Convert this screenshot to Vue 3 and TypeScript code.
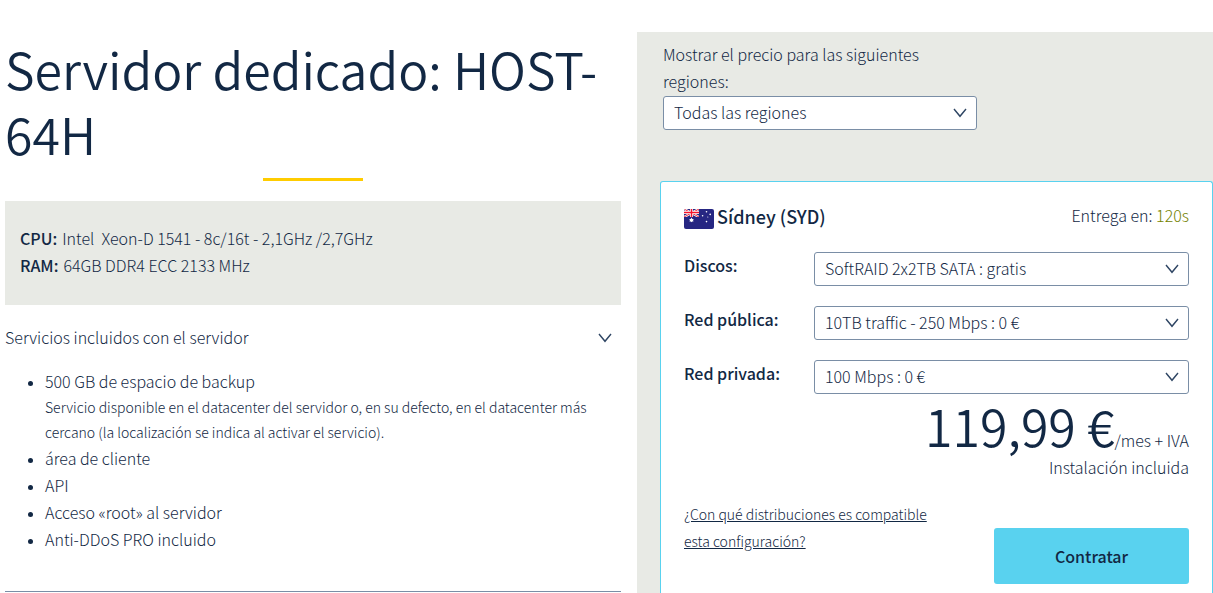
<script setup lang="ts">
import { ref } from 'vue'

interface Option {
  id: string
  label: string
  choices: string[]
}

const regions: string[] = ['Todas las regiones', 'Sídney (SYD)']
const region = ref(regions[0])

const options: Option[] = [
  { id: 'disks', label: 'Discos:', choices: ['SoftRAID 2x2TB SATA : gratis'] },
  { id: 'public', label: 'Red pública:', choices: ['10TB traffic - 250 Mbps : 0 €'] },
  { id: 'private', label: 'Red privada:', choices: ['100 Mbps : 0 €'] },
]

const services: { name: string; note?: string }[] = [
  {
    name: '500 GB de espacio de backup',
    note: 'Servicio disponible en el datacenter del servidor o, en su defecto, en el datacenter más cercano (la localización se indica al activar el servicio).',
  },
  { name: 'área de cliente' },
  { name: 'API' },
  { name: 'Acceso «root» al servidor' },
  { name: 'Anti-DDoS PRO incluido' },
]
const open = ref(true)
</script>

<template>
  <main class="page">
    <section class="info">
      <h1>Servidor dedicado: HOST-64H</h1>
      <div class="accent"></div>
      <dl class="specs">
        <div><dt>CPU:</dt><dd>Intel &nbsp;Xeon-D 1541 - 8c/16t - 2,1GHz /2,7GHz</dd></div>
        <div><dt>RAM:</dt><dd>64GB DDR4 ECC 2133 MHz</dd></div>
      </dl>
      <button class="toggle" type="button" :aria-expanded="open" @click="open = !open">
        <span>Servicios incluidos con el servidor</span>
        <svg class="chevron" viewBox="0 0 14 10" aria-hidden="true"><path d="M1 1 7 8.3 13 1" /></svg>
      </button>
      <ul v-show="open" class="services">
        <li v-for="s in services" :key="s.name">
          {{ s.name }}
          <small v-if="s.note">{{ s.note }}</small>
        </li>
      </ul>
      <hr />
    </section>

    <section class="pricing">
      <div class="filter">
        <label for="region">Mostrar el precio para las siguientes regiones:</label>
        <div class="select">
          <select id="region" v-model="region">
            <option v-for="r in regions" :key="r">{{ r }}</option>
          </select>
          <svg class="chevron" viewBox="0 0 14 10" aria-hidden="true"><path d="M1 1 7 8.3 13 1" /></svg>
        </div>
      </div>

      <article class="card">
        <header>
          <h2>
            <svg class="flag" viewBox="0 0 30 20" aria-hidden="true">
              <defs>
                <clipPath id="flag-shape"><rect width="30" height="20" rx="2" /></clipPath>
                <clipPath id="canton"><rect width="15" height="8" /></clipPath>
              </defs>
              <g clip-path="url(#flag-shape)">
                <rect width="30" height="20" fill="#262682" />
                <g clip-path="url(#canton)">
                  <path d="M0 0 15 8M15 0 0 8" stroke="#fff" stroke-width="2.4" />
                  <path d="M0 0 15 8M15 0 0 8" stroke="#f0283c" stroke-width="1" />
                  <path d="M7.5 0V8M0 3.5H15" stroke="#fff" stroke-width="2.8" />
                  <path d="M7.5 0V8M0 3.5H15" stroke="#f4142c" stroke-width="1.4" />
                </g>
                <path
                  d="M7.5 8.6 8.3 10 9.7 10 9.1 11.2 9.5 12.5 8.2 12.6 7.5 13.2 6.8 12.6 5.5 12.5 5.9 11.2 5.3 10 6.7 10Z"
                  fill="#fff"
                />
                <g fill="#fff">
                  <circle cx="22.5" cy="2.8" r=".8" />
                  <circle cx="18.6" cy="6.7" r=".8" />
                  <circle cx="26.2" cy="5.4" r=".8" />
                  <circle cx="23.8" cy="8" r=".5" />
                  <circle cx="22.5" cy="12.6" r=".8" />
                </g>
              </g>
            </svg>
            <span>Sídney (SYD)</span>
          </h2>
          <p class="delivery">Entrega en: <span>120s</span></p>
        </header>

        <div v-for="o in options" :key="o.id" class="row">
          <label :for="o.id">{{ o.label }}</label>
          <div class="select">
            <select :id="o.id">
              <option v-for="c in o.choices" :key="c">{{ c }}</option>
            </select>
            <svg class="chevron" viewBox="0 0 14 10" aria-hidden="true"><path d="M1 1 7 8.3 13 1" /></svg>
          </div>
        </div>

        <p class="price"><strong>119,99 €</strong><span>/mes + IVA</span></p>
        <p class="setup">Instalación incluida</p>

        <footer>
          <a href="#">¿Con qué distribuciones es compatible esta configuración?</a>
          <button class="order" type="button">Contratar</button>
        </footer>
      </article>
    </section>
  </main>
</template>

<style>
body {
  margin: 0;
  background: #fff;
}
</style>

<style scoped>
* {
  box-sizing: border-box;
}

.page {
  display: grid;
  grid-template-columns: 616fr 576fr;
  column-gap: 16px;
  min-height: 100vh;
  padding: 32px 0 0 5px;
  color: #122844;
  font: 300 16px/27px "Noto Sans CJK SC", "Noto Sans", sans-serif;
}

h1,
h2,
p,
dl,
dd {
  margin: 0;
}

h1 {
  padding-top: 4px;
  font-size: 50px;
  font-weight: 350;
  line-height: 65px;
}

.accent {
  width: 100px;
  height: 3px;
  margin: 12px auto 20px;
  background: #ffcc00;
}

.specs {
  padding: 24px 15px 26px;
  background: #e8eae5;
}

.specs div {
  display: flex;
  gap: 5px;
}

dt {
  font-weight: 500;
}

button,
select {
  color: inherit;
  font: inherit;
}

.toggle {
  display: flex;
  align-items: center;
  justify-content: space-between;
  width: 100%;
  margin-top: 20px;
  padding: 0 9px 1px 0;
  border: 0;
  background: none;
  line-height: 25px;
  text-align: left;
}

.chevron {
  width: 14px;
  height: 10px;
  fill: none;
  stroke: #2e4563;
  stroke-width: 1.4;
  pointer-events: none;
}

.services {
  margin: 17px 0 38px;
  padding-left: 40px;
}

.services li::marker {
  font-size: 14px;
}

.services small {
  display: block;
  font-size: 14px;
  line-height: 25px;
}

hr {
  margin: 0;
  border: 0;
  border-top: 1px solid #7a8ea6;
}

.pricing {
  display: flex;
  flex-direction: column;
  padding: 9px 0 0 23px;
  background: #e8eae5;
}

.filter {
  width: 317px;
  padding-left: 3px;
}

.filter label {
  display: block;
  max-width: 290px;
  margin-bottom: 1px;
}

.select {
  display: grid;
  align-items: center;
}

.select > * {
  grid-area: 1 / 1;
}

.select .chevron {
  justify-self: end;
  margin-right: 10px;
}

select {
  width: 100%;
  height: 34px;
  padding: 0 30px 2px 10px;
  border: 1px solid #7a8ea6;
  border-radius: 3px;
  background: #fff;
  appearance: none;
}

.card {
  flex: 1;
  margin-top: 51px;
  padding: 20px 23px 8px;
  border: 1px solid #59d2ef;
  border-bottom: 0;
  border-radius: 3px 3px 0 0;
  background: #fff;
}

.card header {
  display: flex;
  align-items: flex-start;
  justify-content: space-between;
  margin-bottom: 22px;
}

h2 {
  display: flex;
  align-items: flex-end;
  gap: 3px;
  font-size: 18px;
  font-weight: 500;
  line-height: 28px;
}

.flag {
  width: 30px;
  height: 20px;
  margin-bottom: 1px;
}

.delivery span {
  color: #738200;
}

.row {
  display: grid;
  grid-template-columns: 130px 1fr;
  align-items: start;
  margin-bottom: 20px;
}

.row label {
  font-weight: 500;
}

.price,
.setup {
  text-align: right;
}

.price {
  display: flex;
  align-items: baseline;
  justify-content: flex-end;
  margin-top: -18px;
}

.price strong {
  font-size: 50px;
  font-weight: 350;
  line-height: 58px;
}

footer {
  display: flex;
  align-items: flex-start;
  justify-content: space-between;
  margin-top: 20px;
}

footer a {
  width: 260px;
  color: inherit;
  font-size: 14px;
}

.order {
  width: 195px;
  height: 56px;
  margin-top: 27px;
  border: 0;
  border-radius: 3px;
  background: #59d2ef;
  font-weight: 500;
}
</style>
